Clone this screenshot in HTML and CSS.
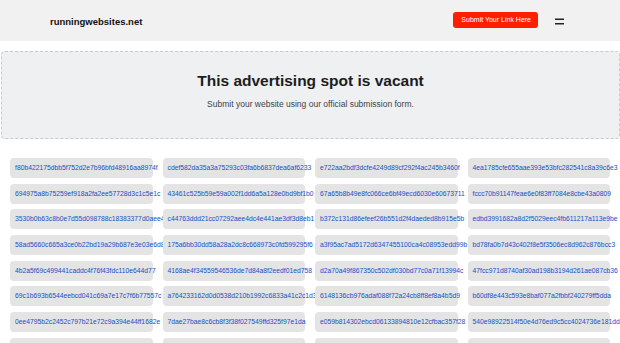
FILE: index.html
```html
<!DOCTYPE html>
<html lang="en">
<head>
  <meta charset="UTF-8" />
  <meta name="viewport" content="width=device-width, initial-scale=1" />
  <title>runningwebsites.net</title>
  <link rel="stylesheet" href="styles.css">
</head>
<body>

  <header class="topbar">
    <a class="logo" href="#">runningwebsites.net</a>
    <div class="topbar-right">
      <a class="submit-btn" href="#">Submit Your Link Here</a>
      <button class="menu-btn" aria-label="Menu">
        <svg width="9" height="7" viewBox="0 0 9 7">
          <rect x="0" y="0.5" width="9" height="1.5" fill="#222" />
          <rect x="0" y="5" width="9" height="1.5" fill="#222" />
        </svg>
      </button>
    </div>
  </header>

  <section class="ad-spot">
    <h1>This advertising spot is vacant</h1>
    <p>Submit your website using our official submission form.</p>
  </section>

  <main class="links">
    <a class="link-card" href="#">f80b422175dbb5f752d2e7b96bfd48916aa8974f</a>
    <a class="link-card" href="#">cdef582da35a3a75293c03fa6b6837dea6af6233</a>
    <a class="link-card" href="#">e722aa2bdf3dcfe4249d89cf292f4ac245b3460f</a>
    <a class="link-card" href="#">4ea1785cfe655aae393e53bfc282541c8a39c6e3</a>

    <a class="link-card" href="#">694975a8b75259ef918a2fa2ee57728d3c1c5e1c</a>
    <a class="link-card" href="#">43461c525b59e59a002f1dd6a5a128e0bd9bf1b0</a>
    <a class="link-card" href="#">67a65b8b49e8fc066ce6bf49ecd6030e60673711</a>
    <a class="link-card" href="#">fccc70b91147feae6e0f83ff7084e8cbe43a0809</a>

    <a class="link-card" href="#">3530b0b63c8b0e7d55d098788c18383377d0aee4</a>
    <a class="link-card" href="#">c44763ddd21cc07292aee4dc4e441ae3df3d8eb1</a>
    <a class="link-card" href="#">b372c131d86efeef26b551d2f4daeded8b915e5b</a>
    <a class="link-card" href="#">edbd3991682a8d2f5029eec4fb611217a113e9be</a>

    <a class="link-card" href="#">58ad5660c665a3ce0b22bd19a29b687e3e03e6d8</a>
    <a class="link-card" href="#">175a6bb30dd58a28a2dc8c668973c0fd599295f6</a>
    <a class="link-card" href="#">a3f95ac7ad5172d6347455100ca4c08953edd99b</a>
    <a class="link-card" href="#">bd78fa0b7d43c402f8e5f3506ec8d962c876bcc3</a>

    <a class="link-card" href="#">4b2a5f69c499441caddc4f76f43fdc110e644d77</a>
    <a class="link-card" href="#">4168ae4f34559546536de7d84a8f2eedf01ed758</a>
    <a class="link-card" href="#">d2a70a49f867350c502df030bd77c0a71f13994c</a>
    <a class="link-card" href="#">47fcc971d8740af30ad198b3194d261ae087cb36</a>

    <a class="link-card" href="#">69c1b693b6544eebcd041c69a7e17c7f6b77557c</a>
    <a class="link-card" href="#">a764233162d0d0538d210b1992c6833a41c2c1d3</a>
    <a class="link-card" href="#">6148136cb976adaf088f72a24cb8ff8ef8a4b5d9</a>
    <a class="link-card" href="#">b60df8e443c593e8baf077a2fbbf240279ff5dda</a>

    <a class="link-card" href="#">0ee4795b2c2452c797b21e72c9a394e44ff1682e</a>
    <a class="link-card" href="#">7dae27bae8c6cb8f3f38f027549ffd325f97e1da</a>
    <a class="link-card" href="#">e059b814302ebcd06133894810e12cfbac357f28</a>
    <a class="link-card" href="#">540e98922514f50e4d76ed9c5cc4024736e181dd</a>

    <a class="link-card" href="#">9a31c0e5f7b2d84a6c1e93f05b7d2a48c6e1f0b3</a>
    <a class="link-card" href="#">2c8e4f61a9d03b57e2f18c4a6d90b3e57f12a8c4</a>
    <a class="link-card" href="#">d71b5a2e93c04f86b1e27a5c9d3f08e46b2c71a9</a>
    <a class="link-card" href="#">8f04c3b72e1a95d6f0c48b3e27a1d96c5f08e3b2</a>
  </main>

</body>
</html>
```

FILE: styles.css
```css
:root {
  --red: #ff1f00;
  --text: #1c1c1c;
  --link: #1450c8;
  --card-bg: #e4e4e4;
  --font-family: 'Liberation Sans', Arial, sans-serif;
}

* {
  box-sizing: border-box;
}

body {
  margin: 0;
  background-color: #fff;
  color: var(--text);
  font-family: var(--font-family);
}

.topbar {
  height: 41px;
  background-color: #f1f1f1;
  display: flex;
  align-items: center;
  justify-content: space-between;
  padding: 0 56px 0 50px;
}

.logo {
  font-size: 9.5px;
  font-weight: bold;
  color: #111;
  text-decoration: none;
  margin-top: 2px;
}

.topbar-right {
  display: flex;
  align-items: center;
  gap: 17px;
}

.submit-btn {
  display: block;
  background-color: var(--red);
  color: #fff;
  font-size: 7px;
  line-height: 16px;
  height: 16px;
  padding: 0 7px 0 8px;
  border-radius: 3px;
  text-decoration: none;
  margin-top: -1px;
}

.menu-btn {
  background: none;
  border: none;
  padding: 0;
  display: flex;
  margin-top: 1px;
}

.ad-spot {
  margin: 10px 0 0 1px;
  height: 88px;
  background-color: #eff0f2;
  border: 1px dashed #c7cbd1;
  border-radius: 4px;
  text-align: center;
  padding-top: 20px;
}

.ad-spot h1 {
  margin: 0;
  font-size: 15.5px;
  line-height: 18px;
  color: #1b1d21;
}

.ad-spot p {
  margin: 9px 0 0;
  font-size: 8.5px;
  color: #3f4248;
}

.links {
  display: grid;
  grid-template-columns: repeat(4, minmax(0, 1fr));
  column-gap: 10px;
  row-gap: 5.7px;
  padding: 19px 10px 0;
}

.link-card {
  display: block;
  min-width: 0;
  height: 20px;
  line-height: 20px;
  padding-left: 5px;
  background-color: var(--card-bg);
  border-radius: 4px;
  color: var(--link);
  font-size: 6.75px;
  white-space: nowrap;
  text-decoration: none;
}
```
